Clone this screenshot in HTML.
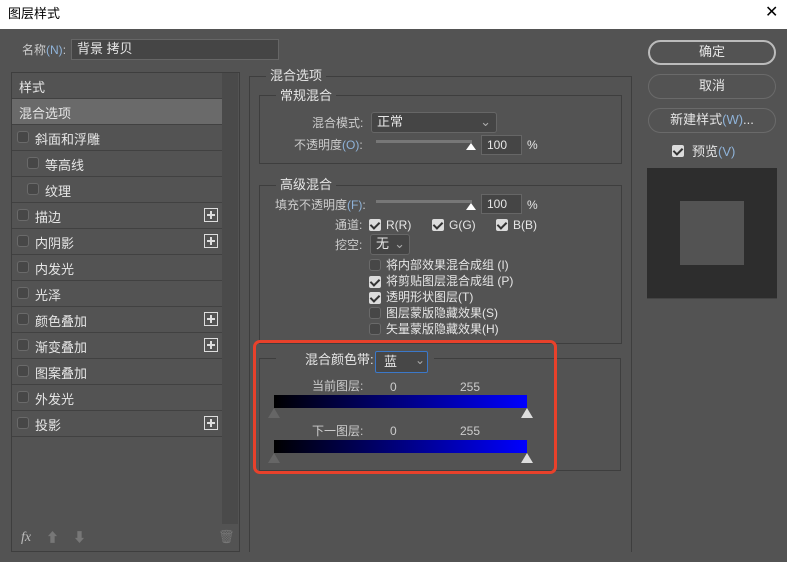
<!DOCTYPE html>
<html><head><meta charset="utf-8"><style>
*{box-sizing:border-box;margin:0;padding:0}
body{width:787px;height:562px;background:#535353;font-family:"Liberation Sans","Noto Sans CJK SC",sans-serif;font-size:12px;color:#e6e6e6;position:relative;overflow:hidden}
.a{position:absolute}
.t{position:absolute;white-space:nowrap;line-height:14px}
.fs{position:absolute;border:1px solid #3e3e3e}
.lg{position:absolute;background:#535353;padding:0 4px;line-height:14px;font-size:13px}
.cb{position:absolute;width:12px;height:12px;border:1px solid #6a6a6a;border-radius:3px;background:#474747}
.ck{position:absolute;width:12px;height:12px;border-radius:2px;background:#dcdcdc}
.ck:after{content:"";position:absolute;left:3px;top:1px;width:4px;height:7px;border:solid #333;border-width:0 2px 2px 0;transform:rotate(45deg)}
.row{position:absolute;left:12px;width:210px;height:26px;border-bottom:1px solid #414141}
.row span{position:absolute;top:4px;font-size:13px}
.row .cb{top:6px}
.plus{position:absolute;left:192px;top:5px;width:14px;height:14px;border:1px solid #ddd}
.plus:before{content:"";position:absolute;left:2px;top:5px;width:8px;height:2px;background:#ddd}
.plus:after{content:"";position:absolute;left:5px;top:2px;width:2px;height:8px;background:#ddd}
.btn{position:absolute;left:648px;width:128px;height:25px;border:1px solid #6a6a6a;border-radius:13px;text-align:center;line-height:22px;font-size:13px}
.inp{position:absolute;background:#454545;border:1px solid #666;padding-left:5px;line-height:18px}
.sl{position:absolute;height:3px;background:#777}
.grad{position:absolute;left:274px;width:253px;height:13px;background:linear-gradient(90deg,#000,#0000ff)}
</style></head><body>
<div class="a" style="left:0;top:0;width:787px;height:29px;background:#fff"></div>
<div class="t" style="left:8px;top:7px;color:#000;font-size:13px">图层样式</div>
<div class="t" style="left:765px;top:6px;color:#000;font-size:16px;font-weight:300">✕</div>

<div class="t" style="left:22px;top:43px;color:#ccc">名称<span style="color:#8fb3d9">(N)</span>:</div>
<div class="inp" style="left:71px;top:39px;width:208px;height:21px;font-size:13px">背景 拷贝</div>

<div class="a" style="left:11px;top:72px;width:229px;height:480px;border:1px solid #3e3e3e"></div>
<div class="a" style="left:222px;top:73px;width:16px;height:451px;background:#4a4a4a"></div>
<div class="row" style="top:73px"><span style="left:7px">样式</span></div>
<div class="row" style="top:99px;background:#6a6a6a"><span style="left:7px">混合选项</span></div>
<div class="row" style="top:125px"><div class="cb" style="left:5px"></div><span style="left:23px">斜面和浮雕</span></div>
<div class="row" style="top:151px"><div class="cb" style="left:15px"></div><span style="left:33px">等高线</span></div>
<div class="row" style="top:177px"><div class="cb" style="left:15px"></div><span style="left:33px">纹理</span></div>
<div class="row" style="top:203px"><div class="cb" style="left:5px"></div><span style="left:23px">描边</span><div class="plus"></div></div>
<div class="row" style="top:229px"><div class="cb" style="left:5px"></div><span style="left:23px">内阴影</span><div class="plus"></div></div>
<div class="row" style="top:255px"><div class="cb" style="left:5px"></div><span style="left:23px">内发光</span></div>
<div class="row" style="top:281px"><div class="cb" style="left:5px"></div><span style="left:23px">光泽</span></div>
<div class="row" style="top:307px"><div class="cb" style="left:5px"></div><span style="left:23px">颜色叠加</span><div class="plus"></div></div>
<div class="row" style="top:333px"><div class="cb" style="left:5px"></div><span style="left:23px">渐变叠加</span><div class="plus"></div></div>
<div class="row" style="top:359px"><div class="cb" style="left:5px"></div><span style="left:23px">图案叠加</span></div>
<div class="row" style="top:385px"><div class="cb" style="left:5px"></div><span style="left:23px">外发光</span></div>
<div class="row" style="top:411px"><div class="cb" style="left:5px"></div><span style="left:23px">投影</span><div class="plus"></div></div>
<div class="t" style="left:21px;top:531px;font-style:italic;font-size:14px;color:#bbb;font-family:'Liberation Serif',serif">fx</div>
<div class="t" style="left:46px;top:531px;color:#777;font-size:13px">⬆</div>
<div class="t" style="left:73px;top:531px;color:#777;font-size:13px">⬇</div>
<div class="t" style="left:218px;top:530px;color:#777;font-size:13px">🗑</div>

<div class="fs" style="left:249px;top:76px;width:383px;height:476px;border-bottom:none"></div>
<div class="lg" style="left:266px;top:69px">混合选项</div>
<div class="fs" style="left:259px;top:95px;width:363px;height:69px"></div>
<div class="lg" style="left:276px;top:89px">常规混合</div>
<div class="t" style="left:312px;top:116px;color:#ccc">混合模式:</div>
<div class="inp" style="left:371px;top:112px;width:126px;height:21px;border-radius:3px;font-size:13px">正常<span style="position:absolute;right:5px;color:#aaa">⌄</span></div>
<div class="t" style="left:294px;top:138px;color:#ccc">不透明度<span style="color:#8fb3d9">(O)</span>:</div>
<div class="sl" style="left:376px;top:140px;width:96px"></div>
<div class="a" style="left:466px;top:143px;width:0;height:0;border-left:5px solid transparent;border-right:5px solid transparent;border-bottom:7px solid #fff"></div>
<div class="inp" style="left:481px;top:135px;width:41px;height:20px">100</div>
<div class="t" style="left:527px;top:138px">%</div>

<div class="fs" style="left:259px;top:185px;width:363px;height:159px"></div>
<div class="lg" style="left:276px;top:178px">高级混合</div>
<div class="t" style="left:275px;top:198px;color:#ccc">填充不透明度<span style="color:#8fb3d9">(F)</span>:</div>
<div class="sl" style="left:376px;top:200px;width:96px"></div>
<div class="a" style="left:466px;top:203px;width:0;height:0;border-left:5px solid transparent;border-right:5px solid transparent;border-bottom:7px solid #fff"></div>
<div class="inp" style="left:481px;top:194px;width:41px;height:20px">100</div>
<div class="t" style="left:527px;top:198px">%</div>
<div class="t" style="left:335px;top:218px;color:#ccc">通道:</div>
<div class="ck" style="left:369px;top:219px"></div><div class="t" style="left:386px;top:218px">R(R)</div>
<div class="ck" style="left:432px;top:219px"></div><div class="t" style="left:449px;top:218px">G(G)</div>
<div class="ck" style="left:496px;top:219px"></div><div class="t" style="left:513px;top:218px">B(B)</div>
<div class="t" style="left:335px;top:238px;color:#ccc">挖空:</div>
<div class="inp" style="left:370px;top:234px;width:40px;height:21px;border-radius:3px;font-size:13px">无<span style="position:absolute;right:4px;color:#aaa">⌄</span></div>
<div class="cb" style="left:369px;top:259px"></div><div class="t" style="left:386px;top:258px">将内部效果混合成组 (I)</div>
<div class="ck" style="left:369px;top:276px"></div><div class="t" style="left:386px;top:274px">将剪贴图层混合成组 (P)</div>
<div class="ck" style="left:369px;top:292px"></div><div class="t" style="left:386px;top:290px">透明形状图层(T)</div>
<div class="cb" style="left:369px;top:307px"></div><div class="t" style="left:386px;top:306px">图层蒙版隐藏效果(S)</div>
<div class="cb" style="left:369px;top:323px"></div><div class="t" style="left:386px;top:322px">矢量蒙版隐藏效果(H)</div>

<div class="fs" style="left:259px;top:358px;width:362px;height:113px"></div>
<div class="a" style="left:276px;top:352px;width:100px;height:14px;background:#535353"></div>
<div class="a" style="left:426px;top:352px;width:8px;height:14px;background:#535353"></div>
<div class="t" style="left:305px;top:353px;font-size:13px">混合颜色带:</div>
<div class="a" style="left:375px;top:351px;width:53px;height:22px;border:1px solid #3b78c9;border-radius:2px;background:#474747"></div>
<div class="t" style="left:384px;top:355px;font-size:13px">蓝</div>
<div class="t" style="left:415px;top:353px;color:#aaa">⌄</div>
<div class="t" style="left:312px;top:379px;color:#ccc">当前图层:</div>
<div class="t" style="left:390px;top:380px;color:#ccc">0</div>
<div class="t" style="left:460px;top:380px;color:#ccc">255</div>
<div class="grad" style="top:395px"></div>
<div class="a" style="left:268px;top:408px;width:0;height:0;border-left:6px solid transparent;border-right:6px solid transparent;border-bottom:10px solid #666"></div>
<div class="a" style="left:521px;top:408px;width:0;height:0;border-left:6px solid transparent;border-right:6px solid transparent;border-bottom:10px solid #ddd"></div>
<div class="t" style="left:312px;top:424px;color:#ccc">下一图层:</div>
<div class="t" style="left:390px;top:424px;color:#ccc">0</div>
<div class="t" style="left:460px;top:424px;color:#ccc">255</div>
<div class="grad" style="top:440px"></div>
<div class="a" style="left:268px;top:453px;width:0;height:0;border-left:6px solid transparent;border-right:6px solid transparent;border-bottom:10px solid #666"></div>
<div class="a" style="left:521px;top:453px;width:0;height:0;border-left:6px solid transparent;border-right:6px solid transparent;border-bottom:10px solid #ddd"></div>

<div class="a" style="left:253px;top:340px;width:304px;height:134px;border:3px solid #e8412b;border-radius:7px"></div>

<div class="btn" style="top:40px;border-color:#bbb;border-width:2px;line-height:20px">确定</div>
<div class="btn" style="top:74px">取消</div>
<div class="btn" style="top:108px">新建样式<span style="color:#8fb3d9">(W)</span>...</div>
<div class="ck" style="left:672px;top:145px"></div>
<div class="t" style="left:692px;top:145px;font-size:13px">预览<span style="color:#8fb3d9">(V)</span></div>
<div class="a" style="left:647px;top:168px;width:130px;height:131px;background:#2d2d2d;border-bottom:1px solid #444"></div>
<div class="a" style="left:680px;top:201px;width:64px;height:64px;background:#535353"></div>
</body></html>
